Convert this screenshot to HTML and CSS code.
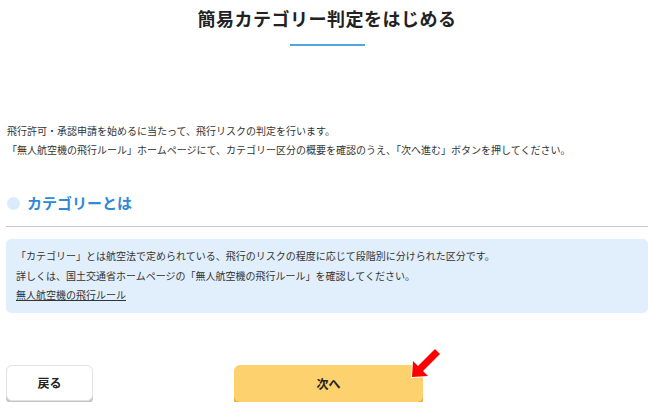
FILE: index.html
```html
<!DOCTYPE html>
<html lang="ja">
<head>
	<meta charset="UTF-8">
	<title>簡易カテゴリー判定</title>
	<meta name="viewport" content="width=device-width, initial-scale=1">
	<link rel="stylesheet" href="styles.css">
</head>
<body>
	<div class="page">
		<h1 class="title">簡易カテゴリー判定をはじめる</h1>
		<div class="title-line"></div>

		<p class="intro">飛行許可・承認申請を始めるに当たって、飛行リスクの判定を行います。<br>「無人航空機の飛行ルール」ホームページにて、カテゴリー区分の概要を確認のうえ、「次へ進む」ボタンを押してください。</p>

		<h2 class="section-head"><span class="dot"></span>カテゴリーとは</h2>

		<div class="info">
			<p>「カテゴリー」とは航空法で定められている、飛行のリスクの程度に応じて段階別に分けられた区分です。</p>
			<p>詳しくは、国土交通省ホームページの「無人航空機の飛行ルール」を確認してください。</p>
			<p><a href="#">無人航空機の飛行ルール</a></p>
		</div>

		<div class="actions">
			<button type="button" class="btn btn-back">戻る</button>
			<div class="next-wrap">
				<button type="button" class="btn btn-next">次へ</button>
				<svg class="pointer" width="34" height="34" viewBox="0 0 34 34">
					<polygon points="2,31 3,15 8,20 25,3 30,8 13,25 18,30" fill="#f00" stroke="#fff" stroke-width="2" stroke-linejoin="miter" paint-order="stroke"/>
				</svg>
			</div>
			<div></div>
		</div>
	</div>
</body>
</html>
```

FILE: styles.css
```css
body {
	margin: 0;
	font-family: "Noto Sans CJK JP", "Noto Sans", sans-serif;
	color: #333;
	background: #fff;
}
.page {
	padding: 0 4px 0 6px;
}
.title {
	margin: 0;
	padding-top: 6px;
	font-size: 18px;
	line-height: 24px;
	font-weight: bold;
	color: #222;
	text-align: center;
	letter-spacing: 0.5px;
}
.title-line {
	width: 75px;
	height: 2px;
	margin: 14px auto 0;
	background: #4ea6e2;
}
.intro {
	margin: 75px 0 0 1px;
	font-size: 10px;
	line-height: 19px;
}
.section-head {
	display: flex;
	align-items: center;
	gap: 7px;
	margin: 34px 0 0;
	padding: 0 0 13px 1px;
	font-size: 15px;
	line-height: 20px;
	font-weight: bold;
	color: #2d8ad6;
	border-bottom: 1px solid #c9c9c9;
}
.dot {
	width: 13px;
	height: 13px;
	border-radius: 50%;
	background: #dcebfb;
}
.info {
	margin-top: 12px;
	padding: 7px 10px 8px;
	background: #e1effd;
	border-radius: 5px;
	font-size: 10px;
	line-height: 19.5px;
}
.info p {
	margin: 0;
}
.info a {
	color: #333;
}
.actions {
	display: grid;
	grid-template-columns: 1fr auto 1fr;
	align-items: start;
	margin-top: 52px;
}
.btn {
	font-family: inherit;
	font-size: 12px;
	font-weight: bold;
	color: #222;
	cursor: pointer;
	border-radius: 6px;
}
.btn-back {
	justify-self: start;
	width: 87px;
	height: 36px;
	background: #fff;
	border: 1px solid #e2e2e2;
	box-shadow: 0 3px 0 #c4c4c4;
}
.next-wrap {
	position: relative;
	margin-left: 3px;
}
.btn-next {
	width: 189px;
	height: 37px;
	background: #fed16f;
	border: none;
	box-shadow: 0 4px 0 #e8b13c;
}
.pointer {
	position: absolute;
	left: 176px;
	top: -19px;
}
```
